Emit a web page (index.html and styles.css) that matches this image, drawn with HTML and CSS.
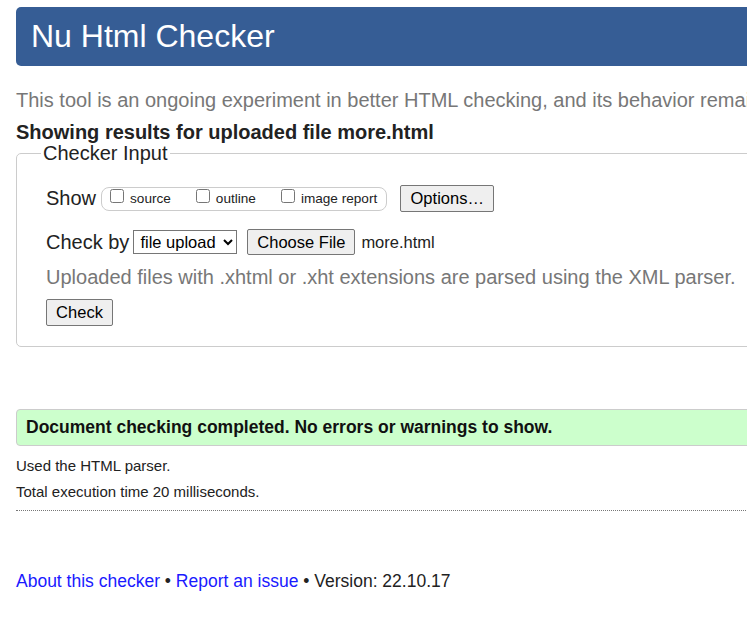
FILE: index.html
```html
<!DOCTYPE html>
<html lang="en">
<head>
<meta charset="utf-8">
<title>Nu Html Checker</title>
<link rel="stylesheet" href="styles.css">
</head>
<body>
<div class="page">
  <header class="banner"><h1 class="title">Nu Html Checker</h1></header>
  <p class="intro">This tool is an ongoing experiment in better HTML checking, and its behavior remains experimental.</p>
  <p class="showing">Showing results for uploaded file more.html</p>
  <fieldset class="input-box">
    <legend class="legend">Checker Input</legend>
    <div class="row row-show">
      <span class="label">Show</span>
      <div class="opts">
        <label class="opt"><input type="checkbox" class="cb"><span class="opt-text">source</span></label>
        <label class="opt"><input type="checkbox" class="cb"><span class="opt-text">outline</span></label>
        <label class="opt"><input type="checkbox" class="cb"><span class="opt-text">image report</span></label>
      </div>
      <button class="btn btn-options" type="button">Options…</button>
    </div>
    <div class="row row-check">
      <span class="label">Check by</span>
      <select class="select"><option>file upload</option></select>
      <button class="btn btn-file" type="button">Choose File</button>
      <span class="filename">more.html</span>
    </div>
    <p class="note">Uploaded files with .xhtml or .xht extensions are parsed using the XML parser.</p>
    <div class="row row-submit">
      <button class="btn btn-check" type="submit">Check</button>
    </div>
  </fieldset>
  <p class="success">Document checking completed. No errors or warnings to show.</p>
  <p class="info">Used the HTML parser.</p>
  <p class="info info-second">Total execution time 20 milliseconds.</p>
  <hr class="sep">
  <p class="footer"><a class="link" href="#">About this checker</a> • <a class="link" href="#">Report an issue</a> • Version: 22.10.17</p>
</div>
</body>
</html>
```

FILE: styles.css
```css
html, body {
  margin: 0;
  padding: 0;
  overflow: hidden;
  background: #fff;
}
body {
  font-family: "Liberation Sans", Arial, sans-serif;
  color: #222;
}
.page {
  width: 1000px;
  padding: 7px 0 0 16px;
}
.banner {
  background: #365d95;
  border-radius: 5px;
  height: 59px;
  box-sizing: border-box;
  padding: 11px 15px;
}
.title {
  margin: 0;
  font-size: 32px;
  line-height: 37px;
  font-weight: normal;
  color: #fff;
}
.intro {
  margin: 23px 0 0;
  font-size: 20px;
  line-height: 23px;
  color: #777;
  white-space: nowrap;
}
.showing {
  margin: 9px 0 0;
  font-size: 20px;
  line-height: 23px;
  font-weight: bold;
  color: #222;
}
.input-box {
  margin: -2px 0 0;
  border: 1px solid #ccc;
  border-radius: 5px;
  padding: 20px 29px 20px;
}
.legend {
  margin-left: -5px;
  padding: 0 2px;
  font-size: 20px;
  line-height: 23px;
}
.row {
  display: flex;
  align-items: center;
}
.label {
  font-size: 20px;
  line-height: 23px;
}
.row-show {
  height: 27px;
}
.opts {
  display: flex;
  align-items: flex-start;
  height: 24px;
  box-sizing: border-box;
  margin-left: 5px;
  padding: 0 9px 0 8px;
  border: 1px solid #ccc;
  border-radius: 8px;
  margin-top: 1px;
}
.opt {
  display: flex;
  align-items: flex-start;
  margin-right: 25px;
}
.opt:last-child {
  margin-right: 0;
}
.cb {
  width: 14px;
  height: 14px;
  margin: 1px 0 0;
}
.opt-text {
  margin-left: 6px;
  margin-top: 3px;
  font-size: 13.6px;
  line-height: 16px;
}
.btn {
  font-family: "Liberation Sans", Arial, sans-serif;
  font-size: 16.5px;
  color: #000;
  background: #efefef;
  border: 1px solid #767676;
  border-radius: 2px;
  box-sizing: border-box;
  padding: 0;
}
.btn-options {
  margin-left: 13px;
  width: 94px;
  height: 27px;
}
.row-check {
  margin-top: 17px;
  height: 26px;
}
.select {
  margin-left: 4px;
  width: 104px;
  height: 24px;
  font-family: "Liberation Sans", Arial, sans-serif;
  font-size: 16.5px;
  color: #000;
  background: #fff;
  border: 1px solid #767676;
  border-radius: 0;
  padding: 0 0 0 2px;
}
.btn-file {
  margin-left: 10px;
  width: 108px;
  height: 26px;
}
.filename {
  margin-left: 6px;
  font-size: 16.5px;
}
.note {
  margin: 11px 0 0;
  font-size: 20px;
  line-height: 23px;
  color: #777;
  white-space: nowrap;
}
.row-submit {
  margin-top: 10px;
}
.btn-check {
  width: 67px;
  height: 27px;
}
.success {
  margin: 62px 0 0;
  background: #ccffcc;
  border: 1px solid #ccc;
  border-radius: 4px;
  padding: 7px 9px 8px;
  font-size: 17.5px;
  line-height: 20px;
  font-weight: bold;
  color: #111;
}
.info {
  margin: 11px 0 0;
  font-size: 15px;
  line-height: 17px;
  color: #222;
}
.info-second {
  margin-top: 9px;
}
.sep {
  margin: 10px 0 0;
  border: 0;
  border-top: 1px dotted #777;
  height: 0;
}
.footer {
  margin: 60px 0 0;
  font-size: 17.5px;
  line-height: 20px;
  color: #222;
}
.link {
  color: #1a1aff;
  text-decoration: none;
}
```
